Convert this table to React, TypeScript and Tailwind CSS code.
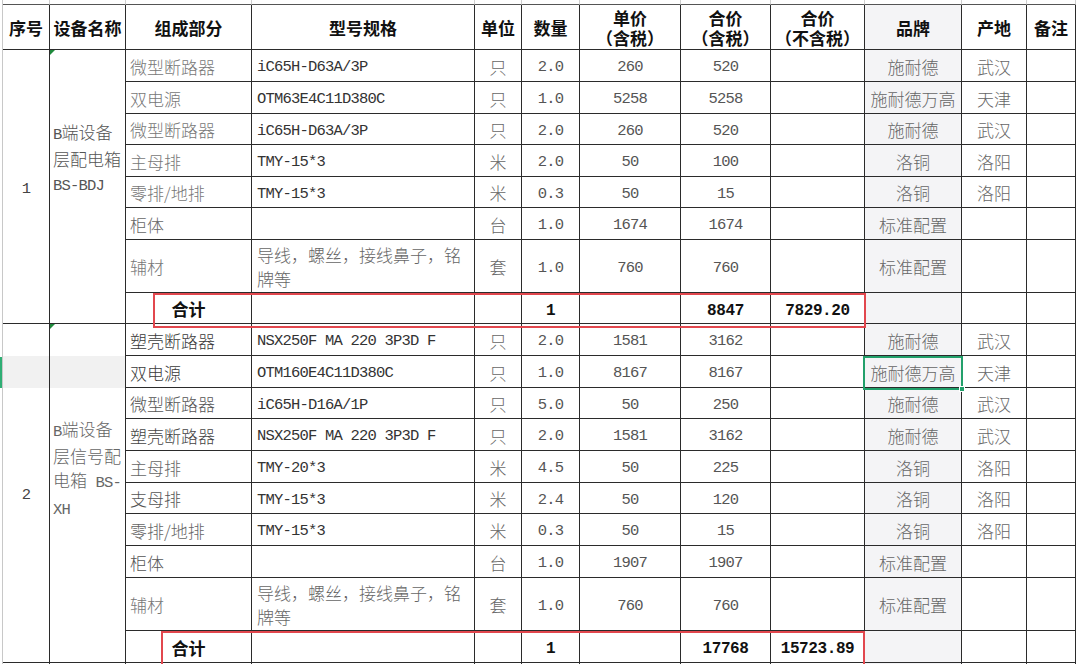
import type { ReactNode } from "react";

const cjk = "font-['Noto_Sans_CJK_SC',sans-serif]";
const mono = "font-['Liberation_Mono','Noto_Sans_CJK_SC',monospace] text-[15.5px] tracking-[-0.8px]";
const line = "border-[#2b2b2b]";

type Item = {
  part: string;
  partTone: string;
  spec?: string;
  unit: string;
  qty: string;
  price: string;
  total: string;
  brand: string;
  origin: string;
  aux?: boolean;
};

const groupOne: Item[] = [
  { part: "微型断路器", partTone: "text-[#777]", spec: "iC65H-D63A/3P", unit: "只", qty: "2.0", price: "260", total: "520", brand: "施耐德", origin: "武汉" },
  { part: "双电源", partTone: "text-[#777]", spec: "OTM63E4C11D380C", unit: "只", qty: "1.0", price: "5258", total: "5258", brand: "施耐德万高", origin: "天津" },
  { part: "微型断路器", partTone: "text-[#777]", spec: "iC65H-D63A/3P", unit: "只", qty: "2.0", price: "260", total: "520", brand: "施耐德", origin: "武汉" },
  { part: "主母排", partTone: "text-[#777]", spec: "TMY-15*3", unit: "米", qty: "2.0", price: "50", total: "100", brand: "洛铜", origin: "洛阳" },
  { part: "零排/地排", partTone: "text-[#777]", spec: "TMY-15*3", unit: "米", qty: "0.3", price: "50", total: "15", brand: "洛铜", origin: "洛阳" },
  { part: "柜体", partTone: "text-[#666]", unit: "台", qty: "1.0", price: "1674", total: "1674", brand: "标准配置", origin: "" },
  { part: "辅材", partTone: "text-[#777]", aux: true, unit: "套", qty: "1.0", price: "760", total: "760", brand: "标准配置", origin: "" },
];

const groupTwo: Item[] = [
  { part: "塑壳断路器", partTone: "text-[#3a3a3a]", spec: "NSX250F MA 220 3P3D F", unit: "只", qty: "2.0", price: "1581", total: "3162", brand: "施耐德", origin: "武汉" },
  { part: "双电源", partTone: "text-[#3a3a3a]", spec: "OTM160E4C11D380C", unit: "只", qty: "1.0", price: "8167", total: "8167", brand: "施耐德万高", origin: "天津" },
  { part: "微型断路器", partTone: "text-[#555]", spec: "iC65H-D16A/1P", unit: "只", qty: "5.0", price: "50", total: "250", brand: "施耐德", origin: "武汉" },
  { part: "塑壳断路器", partTone: "text-[#444]", spec: "NSX250F MA 220 3P3D F", unit: "只", qty: "2.0", price: "1581", total: "3162", brand: "施耐德", origin: "武汉" },
  { part: "主母排", partTone: "text-[#666]", spec: "TMY-20*3", unit: "米", qty: "4.5", price: "50", total: "225", brand: "洛铜", origin: "洛阳" },
  { part: "支母排", partTone: "text-[#555]", spec: "TMY-15*3", unit: "米", qty: "2.4", price: "50", total: "120", brand: "洛铜", origin: "洛阳" },
  { part: "零排/地排", partTone: "text-[#666]", spec: "TMY-15*3", unit: "米", qty: "0.3", price: "50", total: "15", brand: "洛铜", origin: "洛阳" },
  { part: "柜体", partTone: "text-[#555]", unit: "台", qty: "1.0", price: "1907", total: "1907", brand: "标准配置", origin: "" },
  { part: "辅材", partTone: "text-[#777]", aux: true, unit: "套", qty: "1.0", price: "760", total: "760", brand: "标准配置", origin: "" },
];

function Cell({ className = "pt-[2px]", children }: { className?: string; children?: ReactNode }) {
  return (
    <div className={`flex items-center overflow-hidden whitespace-nowrap border-b border-r ${line} ${className}`}>
      {children}
    </div>
  );
}

function ItemRow({ item }: { item: Item }) {
  return (
    <>
      <Cell className={`pl-[4px] pt-[2px] font-light ${item.partTone}`}>{item.part}</Cell>
      {item.aux ? (
        <Cell className="pl-[5px] pt-[2px]">
          <span className="font-light leading-[24px] text-[#666]">
            导线，螺丝，接线鼻子，铭
            <br />
            牌等
          </span>
        </Cell>
      ) : (
        <Cell className={`pl-[5px] pt-[5px] ${mono} text-[#333]`}>{item.spec}</Cell>
      )}
      <Cell className="justify-center pt-[2px] font-light text-[#666]">{item.unit}</Cell>
      <Cell className={`justify-center pt-[5px] ${mono} text-[#555]`}>{item.qty}</Cell>
      <Cell className={`justify-center pt-[5px] ${mono} text-[#555]`}>{item.price}</Cell>
      <Cell className={`justify-center pt-[5px] ${mono} text-[#555]`}>{item.total}</Cell>
      <Cell />
      <Cell className="justify-center bg-[#f4f4f6] pt-[2px] font-light text-[#666]">{item.brand}</Cell>
      <Cell className="justify-center pt-[2px] font-light text-[#666]">{item.origin}</Cell>
      <Cell />
    </>
  );
}

function SumRow({ total, net }: { total: string; net: string }) {
  const num = "pt-[5px] font-['Liberation_Mono',monospace] text-[16px] tracking-[-0.4px] font-bold text-[#111]";
  return (
    <>
      <Cell className="justify-center pt-[2px] font-bold text-[#111]">合计</Cell>
      <Cell />
      <Cell />
      <Cell className={`justify-center ${num}`}>1</Cell>
      <Cell />
      <Cell className={`justify-center ${num}`}>{total}</Cell>
      <Cell className={`justify-center ${num}`}>{net}</Cell>
      <Cell className="bg-[#f4f4f6]" />
      <Cell />
      <Cell />
    </>
  );
}

const headers: ReactNode[] = [
  "序号",
  "设备名称",
  "组成部分",
  "型号规格",
  "单位",
  "数量",
  <>单价<br />（含税）</>,
  <>合价<br />（含税）</>,
  <>合价<br />（不含税）</>,
  "品牌",
  "产地",
  "备注",
];

function ErrorMark() {
  return <span className="absolute left-0 top-0 h-0 w-0 border-r-[5px] border-t-[5px] border-r-transparent border-t-[#1f8a3c]" />;
}

export default function App() {
  return (
    <div className={`relative h-[664px] w-[1080px] overflow-hidden bg-white pl-[2px] text-[17px] ${cjk}`}>
      <div className="grid w-fit grid-cols-[47px_76px_126px_223px_47px_58px_101px_90px_94px_97px_65px_49px] grid-rows-[5px_45px_32px_32px_31px_32px_31px_32px_53px_31px_32px_32px_31px_32px_32px_31px_32px_32px_53px_32px_32px] border-l border-[#c8c8c8]">
        {headers.map((_, i) => (
          <div key={`stub-${i}`} className="border-b border-r border-[#cfcfcf] border-b-[#555]" />
        ))}
        {headers.map((h, i) => (
          <Cell
            key={`head-${i}`}
            className={`flex-col justify-center pt-[2px] text-center font-bold leading-[20px] text-[#111] ${i === 9 ? "bg-[#f4f4f6]" : ""}`}
          >
            {h}
          </Cell>
        ))}

        <div className="col-span-2 col-start-1 row-start-12 bg-[#f1f1f1]" />

        <div className={`col-start-1 row-span-8 row-start-3 flex items-center justify-center border-b border-r ${line} pt-[6px] ${mono} text-[#444]`}>
          1
        </div>
        <div className={`relative col-start-2 row-span-8 row-start-3 border-b border-r ${line} pl-[3px] pt-[70px] font-light leading-[24px] text-[#555]`}>
          <ErrorMark />
          <span className={mono}>B</span>端设备
          <br />
          层配电箱
          <br />
          <span className={mono}>BS-BDJ</span>
        </div>

        <div className={`col-start-1 row-span-10 row-start-11 flex items-center justify-center border-b border-r ${line} pt-[6px] ${mono} text-[#444]`}>
          2
        </div>
        <div className={`relative col-start-2 row-span-10 row-start-11 border-b border-r ${line} pl-[3px] pt-[93px] font-light leading-[24px] text-[#666]`}>
          <ErrorMark />
          <span className={mono}>B</span>端设备
          <br />
          层信号配
          <br />
          电箱<span className={mono}> BS-</span>
          <br />
          <span className={mono}>XH</span>
        </div>

        {groupOne.map((item, i) => (
          <ItemRow key={`a-${i}`} item={item} />
        ))}
        <SumRow total="8847" net="7829.20" />

        {groupTwo.map((item, i) => (
          <ItemRow key={`b-${i}`} item={item} />
        ))}
        <SumRow total="17768" net="15723.89" />

        {headers.map((_, i) => (
          <div key={`tail-${i}`} className={`border-r ${line} ${i === 9 ? "bg-[#f4f4f6]" : ""}`} />
        ))}
      </div>

      {/* annotations drawn over the sheet */}
      <div className="pointer-events-none absolute left-[153px] top-[293px] h-[35px] w-[713px] border-2 border-[#e2474e]" />
      <div className="pointer-events-none absolute left-[161px] top-[631px] h-[40px] w-[704px] border-2 border-[#e2474e]" />
      <div className="pointer-events-none absolute left-[863px] top-[356px] h-[34px] w-[100px] border-2 border-[#22a06b]">
        <span className="absolute -bottom-[4px] -right-[4px] h-[6px] w-[6px] border border-white bg-[#22a06b]" />
      </div>
      <div className="absolute left-0 top-[357px] h-[31px] w-[2px] bg-[#2fae74]" />
    </div>
  );
}
